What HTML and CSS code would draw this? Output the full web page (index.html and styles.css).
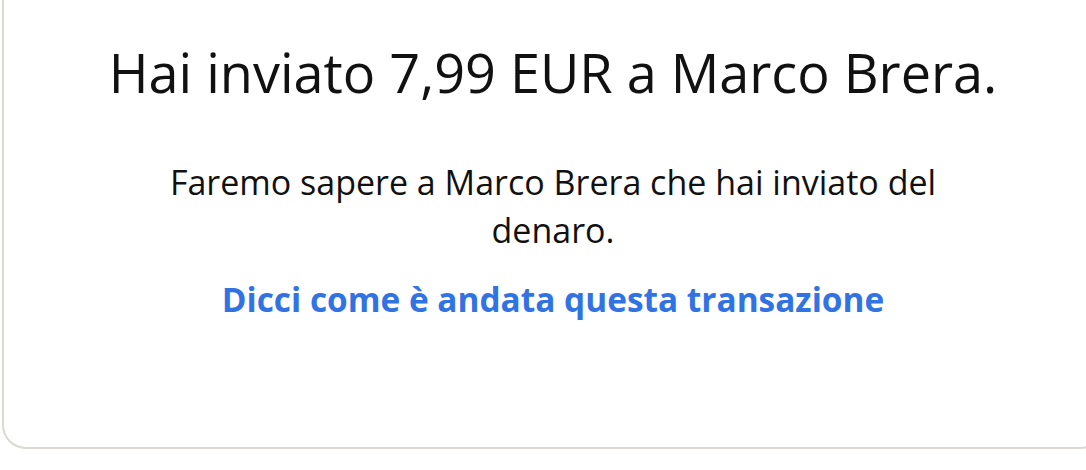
FILE: index.html
```html
<!DOCTYPE html>
<html lang="it">
<head>
    <meta charset="UTF-8">
    <meta name="viewport" content="width=device-width, initial-scale=1.0">
    <title>Pagamento inviato</title>
    <link rel="stylesheet" href="styles.css">
</head>
<body>
    <div class="page">
        <div class="card">
            <h1 class="title">Hai inviato 7,99 EUR a Marco Brera.</h1>
            <p class="message">Faremo sapere a Marco Brera che hai inviato del denaro.</p>
            <a class="feedback" href="#">Dicci come è andata questa transazione</a>
        </div>
    </div>
</body>
</html>
```

FILE: styles.css
```css
body {
    font-family: "Open Sans", "Noto Sans", sans-serif;
    background-color: #fff;
    color: #111;
    margin: 0;
    padding: 0;
    overflow: hidden;
}

.page {
    width: 1102px;
    padding-left: 2px;
}

.card {
    display: flex;
    flex-direction: column;
    align-items: center;
    height: 449px;
    box-sizing: border-box;
    border: 2px solid #dcd8d4;
    border-top: none;
    border-radius: 0 0 24px 24px;
    padding-top: 40px;
    text-align: center;
}

.title {
    font-size: 54px;
    font-weight: 400;
    line-height: 64px;
    margin: 0;
}

.message {
    font-size: 34px;
    line-height: 48px;
    width: 840px;
    margin: 54px 0 0;
}

.feedback {
    font-size: 33.4px;
    font-weight: 700;
    line-height: 40px;
    color: #3273e4;
    text-decoration: none;
    margin-top: 25px;
}
```
